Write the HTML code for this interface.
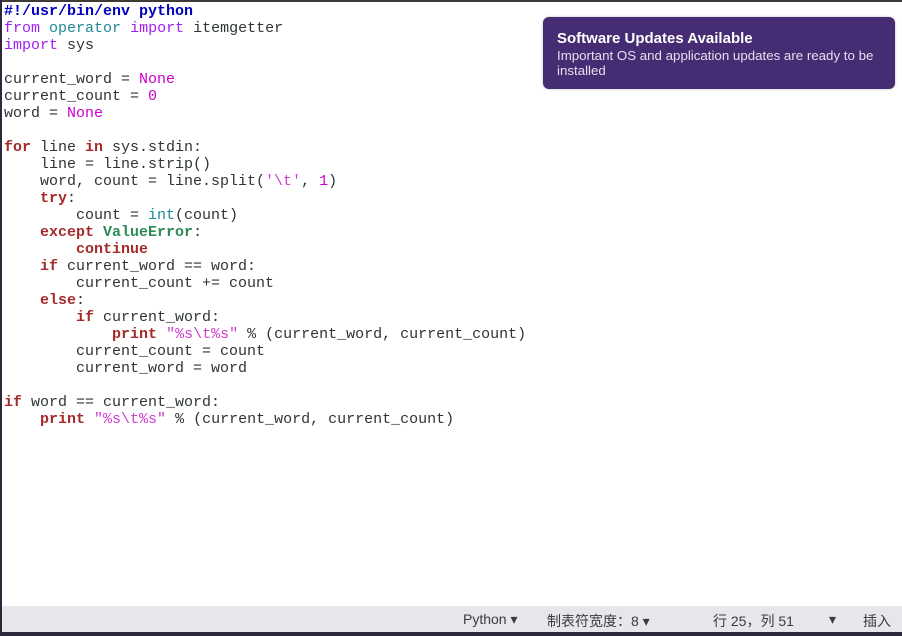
<!DOCTYPE html>
<html><head><meta charset="utf-8"><style>
body{margin:0;width:902px;height:636px;overflow:hidden;background:#fff;position:relative;font-family:"Liberation Sans","Noto Sans CJK SC",sans-serif}
.top{position:absolute;left:0;top:0;width:902px;height:2px;background:#3c3b37}
.left{position:absolute;left:0;top:0;width:2px;height:636px;background:#2c2a3a}
pre{position:absolute;left:4px;top:3px;margin:0;font-family:"Liberation Mono",monospace;font-size:15px;line-height:17px;color:#2e3436}
.k{color:#a020f0}.b{font-weight:bold;color:#a52a2a}.m{color:#1f8a98}.c{color:#cc00cc;}.s{color:#d03bd0}
.sh{color:#0000c0;font-weight:bold}.e{color:#2e8b57;font-weight:bold}
.st{position:absolute;left:2px;top:606px;width:900px;height:26px;background:#e8e6ea;font-size:14px;color:#3c3c3c}
.st span{position:absolute;top:5px}
.bot{position:absolute;left:0;top:632px;width:902px;height:4px;background:#2c2a3a}
.n{position:absolute;left:543px;top:17px;width:352px;height:72px;background:#452c73;border-radius:6px;color:#fff;box-shadow:0 0 2px rgba(0,0,0,.3)}
.n .t{position:absolute;left:14px;top:13px;font-size:15px;font-weight:bold}
.n .d{position:absolute;left:14px;top:31px;font-size:13.3px;line-height:15px;color:#e6e0ee;width:334px}
</style></head><body>
<div class="top"></div><div class="left"></div>
<pre><span class="sh">#!/usr/bin/env python</span>
<span class="k">from</span> <span class="m">operator</span> <span class="k">import</span> itemgetter
<span class="k">import</span> sys

current_word = <span class="c">None</span>
current_count = <span class="c">0</span>
word = <span class="c">None</span>

<span class="b">for</span> line <span class="b">in</span> sys.stdin:
    line = line.strip()
    word, count = line.split(<span class="s">'\t'</span>, <span class="c">1</span>)
    <span class="b">try</span>:
        count = <span class="m">int</span>(count)
    <span class="b">except</span> <span class="e">ValueError</span>:
        <span class="b">continue</span>
    <span class="b">if</span> current_word == word:
        current_count += count
    <span class="b">else</span>:
        <span class="b">if</span> current_word:
            <span class="b">print</span> <span class="s">"%s\t%s"</span> % (current_word, current_count)
        current_count = count
        current_word = word

<span class="b">if</span> word == current_word:
    <span class="b">print</span> <span class="s">"%s\t%s"</span> % (current_word, current_count)</pre>
<div class="n"><div class="t">Software Updates Available</div><div class="d">Important OS and application updates are ready to be installed</div></div>
<div class="st">
<span style="left:461px">Python ▾</span>
<span style="left:545px">制表符宽度：8 ▾</span>
<span style="left:711px">行 25，列 51</span>
<span style="left:827px">▾</span>
<span style="left:861px">插入</span>
</div>
<div class="bot"></div>
</body></html>
